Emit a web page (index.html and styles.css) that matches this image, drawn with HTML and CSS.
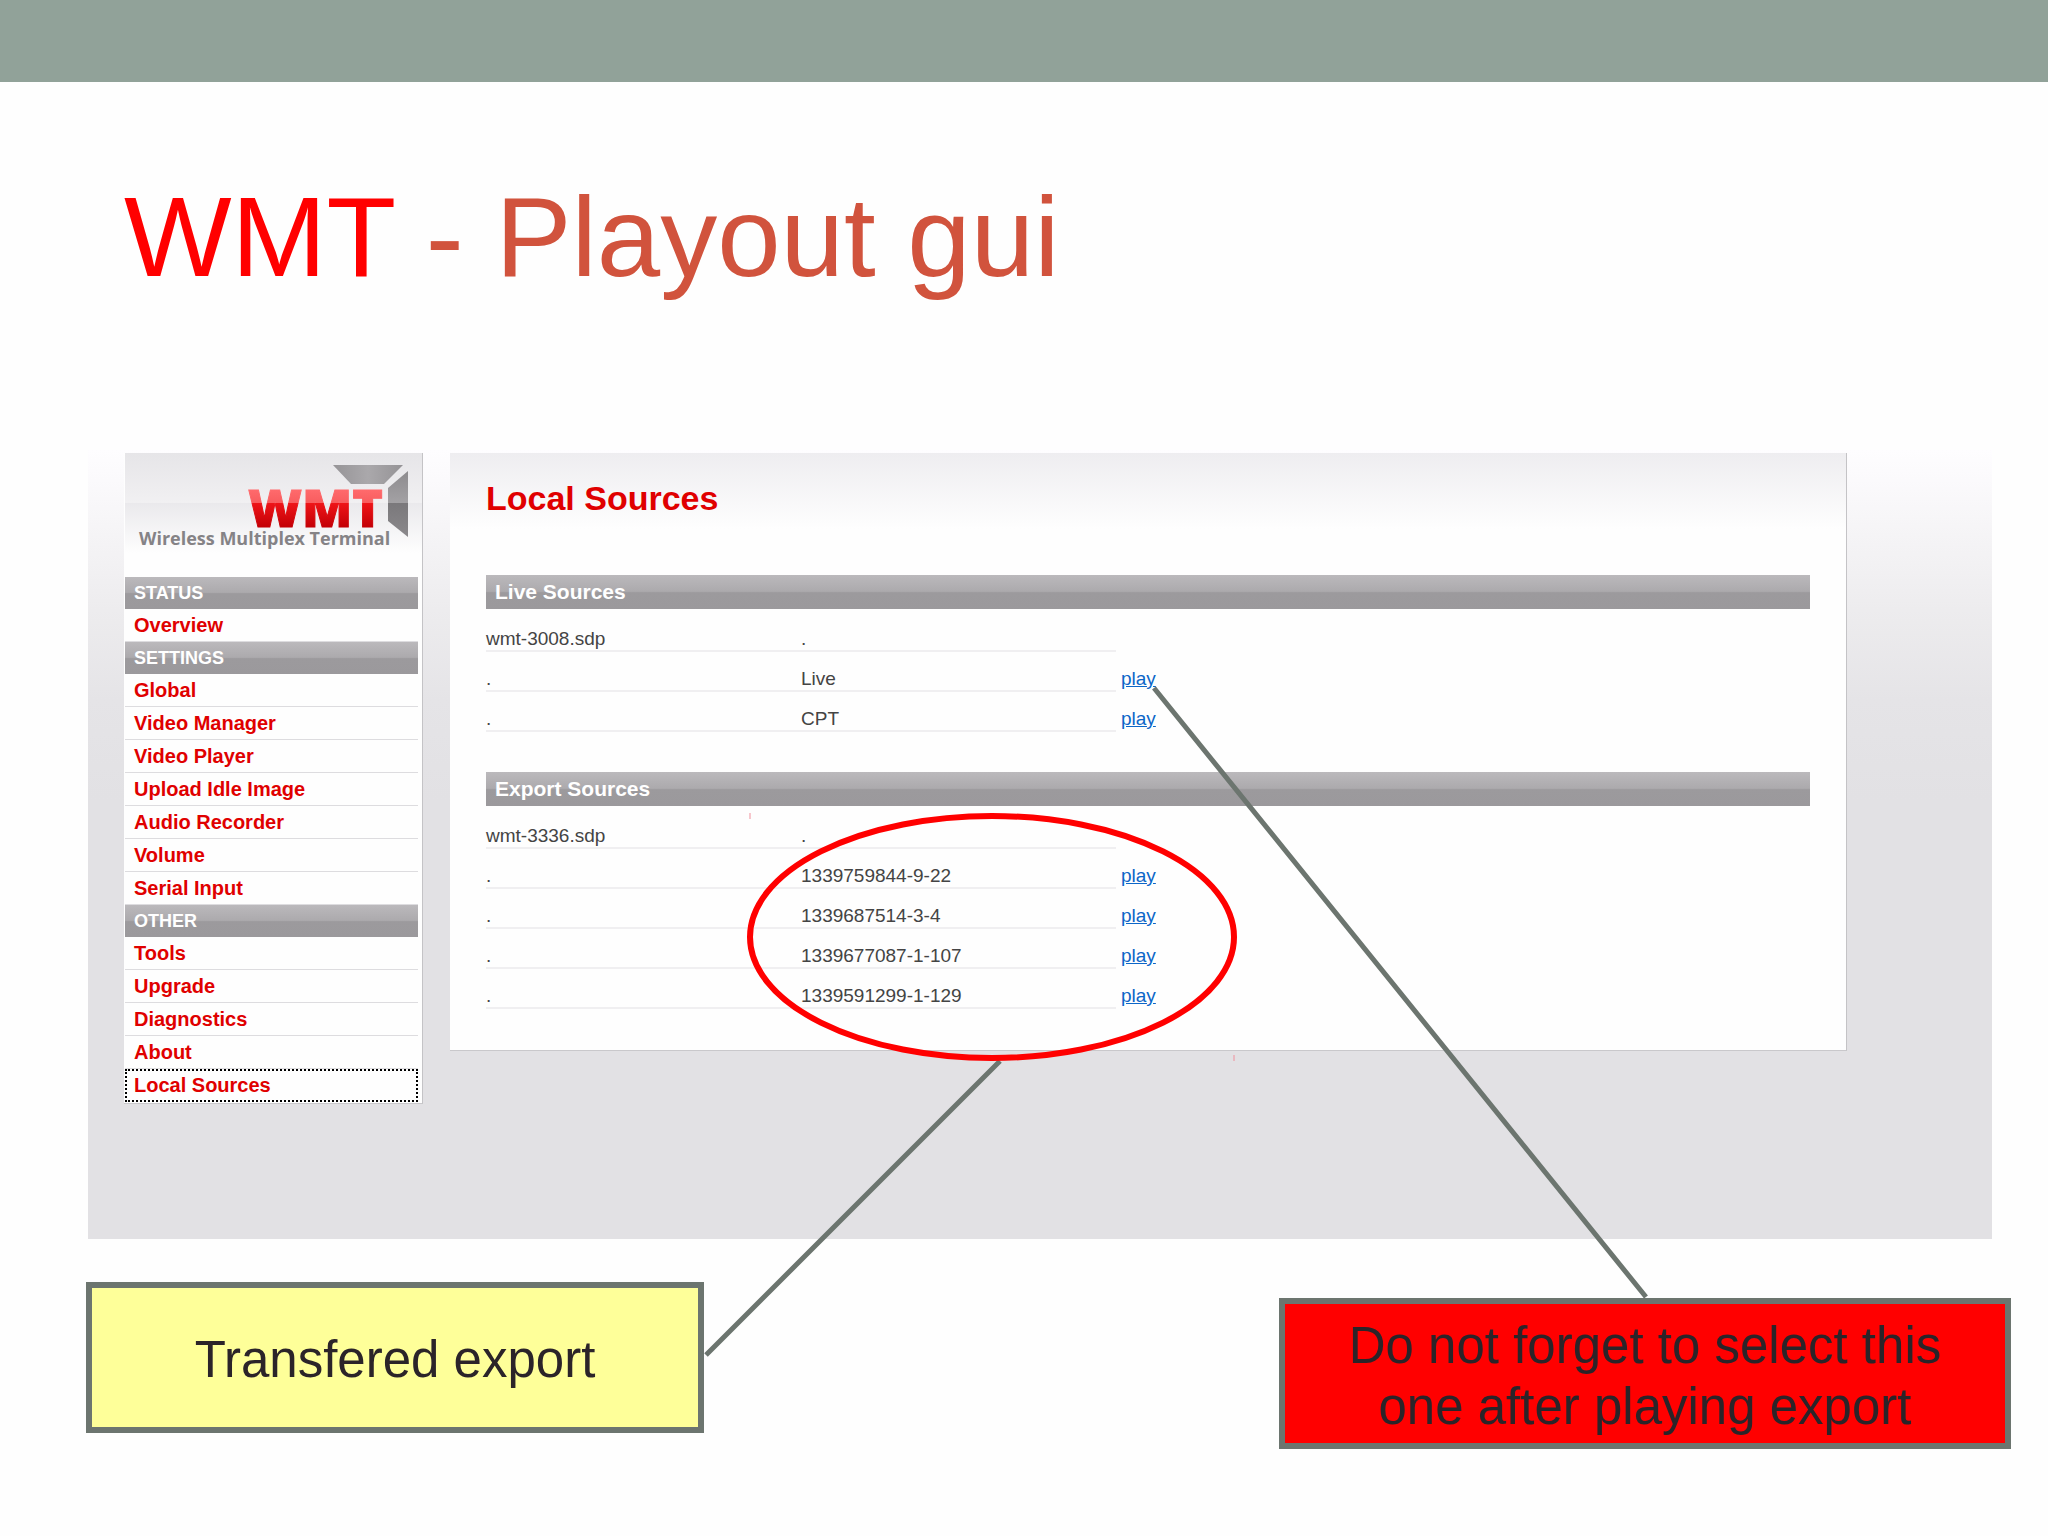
FILE: index.html
```html
<!DOCTYPE html>
<html lang="en">

<head>
  <meta charset="utf-8">
  <meta name="viewport" content="width=device-width, initial-scale=1">
  <title>WMT - Playout gui</title>
  <link rel="stylesheet" href="styles.css">
</head>

<body>
  <div class="slide">
    <div class="top-bar"></div>
    <h1><span class="brand">WMT</span> - Playout gui</h1>

    <div class="screen">
      <div class="sidebar">
        <svg class="logo" viewBox="0 0 297 124" role="img" aria-label="Wireless Multiplex Terminal">
          <defs>
            <linearGradient id="red" gradientUnits="userSpaceOnUse" x1="0" y1="37" x2="0" y2="74">
              <stop offset="0" stop-color="#ff6a6c" />
              <stop offset="0.36" stop-color="#f85c5e" />
              <stop offset="0.36" stop-color="#ee1418" />
              <stop offset="1" stop-color="#c40006" />
            </linearGradient>
            <linearGradient id="top" x1="0" y1="0" x2="1" y2="0">
              <stop offset="0" stop-color="#969497" />
              <stop offset="0.5" stop-color="#aaa8ab" />
              <stop offset="1" stop-color="#959396" />
            </linearGradient>
            <linearGradient id="side" gradientUnits="userSpaceOnUse" x1="0" y1="18" x2="0" y2="84">
              <stop offset="0" stop-color="#8d8b8e" />
              <stop offset="0.48" stop-color="#a3a1a4" />
              <stop offset="0.48" stop-color="#7a787b" />
              <stop offset="1" stop-color="#8b898c" />
            </linearGradient>
          </defs>
          <polygon points="208,12 278,12 259,31 226,31" fill="url(#top)" />
          <polygon points="283,18 283,84 263,68 263,35" fill="url(#side)" />
          <text class="logo-name" x="123" y="74">WMT</text>
          <text class="logo-tagline" x="14" y="92">Wireless Multiplex Terminal</text>
        </svg>

        <nav>
          <h3>STATUS</h3>
          <a href="#">Overview</a>
          <h3>SETTINGS</h3>
          <a href="#">Global</a>
          <a href="#">Video Manager</a>
          <a href="#">Video Player</a>
          <a href="#">Upload Idle Image</a>
          <a href="#">Audio Recorder</a>
          <a href="#">Volume</a>
          <a href="#">Serial Input</a>
          <h3>OTHER</h3>
          <a href="#">Tools</a>
          <a href="#">Upgrade</a>
          <a href="#">Diagnostics</a>
          <a href="#">About</a>
          <a href="#" class="current">Local Sources</a>
        </nav>
      </div>

      <div class="panel">
        <h2>Local Sources</h2>

        <h4>Live Sources</h4>
        <table>
          <tr><td>wmt-3008.sdp</td><td>.</td><td></td></tr>
          <tr><td>.</td><td>Live</td><td><a href="#">play</a></td></tr>
          <tr><td>.</td><td>CPT</td><td><a href="#">play</a></td></tr>
        </table>

        <h4>Export Sources</h4>
        <table>
          <tr><td>wmt-3336.sdp</td><td>.</td><td></td></tr>
          <tr><td>.</td><td>1339759844-9-22</td><td><a href="#">play</a></td></tr>
          <tr><td>.</td><td>1339687514-3-4</td><td><a href="#">play</a></td></tr>
          <tr><td>.</td><td>1339677087-1-107</td><td><a href="#">play</a></td></tr>
          <tr><td>.</td><td>1339591299-1-129</td><td><a href="#">play</a></td></tr>
        </table>
      </div>
    </div>

    <div class="notes">
      <div class="note export">Transfered export</div>
      <div class="note warning">Do not forget to select this one after playing export</div>
    </div>

    <!-- arrows from the notes to the screen -->
    <svg class="marks" viewBox="0 0 2048 1536" aria-hidden="true">
      <path class="pointer" d="M1154 688L1646 1297M1000 1061L706 1355" />
      <ellipse cx="992" cy="937" rx="242" ry="121" />
      <path class="corner" d="M750 813v6M1234 1055v6" />
    </svg>
  </div>
</body>

</html>
```
FILE: styles.css
```css
body {
  margin: 0;
  background-color: #fefefe;
  font-family: "Liberation Sans", Arial, sans-serif;
}

h1,
h2,
h3,
h4 {
  margin: 0;
}

.slide {
  position: relative;
  padding-bottom: 88px;
}

.top-bar {
  height: 82px;
  background-color: #91a299;
}

h1 {
  margin: 90px 124px 148px;
  font-size: 114px;
  line-height: 130px;
  font-weight: normal;
  color: #d1533d;
}

.brand {
  color: #f00;
}

.screen {
  display: flex;
  align-items: flex-start;
  gap: 27px;
  margin: 0 56px 0 88px;
  padding: 3px 145px 135px 36px;
  background: linear-gradient(#fefdff, #fbfafc 30px, #edecee 160px, #e5e4e7 250px, #e2e1e4 350px);
}

/* sidebar */

.sidebar {
  flex: 0 0 298px;
  border-right: 1px solid #c4c3c6;
  border-bottom: 1px solid #c9c8cb;
  background-color: #fefefe;
}

.logo {
  display: block;
  height: 124px;
  margin-left: 1px;
  background: linear-gradient(#e6e5e8, #f1f0f2 50px, #eae9ec 50px, #fefefe 100px);
}

.logo-name {
  font: 800 52px "Open Sans", sans-serif;
  fill: url(#red);
  stroke: url(#red);
  stroke-width: 1;
}

.logo-tagline {
  font: 700 18px "Open Sans", sans-serif;
  fill: #858386;
}

nav {
  padding: 0 4px 1px 1px;
}

h3,
h4 {
  color: #fff;
  background: linear-gradient(#bbb9bc, #acaaad 48%, #9c9a9d 52%, #9b999c);
}

h3 {
  padding-left: 9px;
  font-size: 18px;
  line-height: 32px;
}

nav a {
  display: block;
  padding-left: 9px;
  border-bottom: 1px solid #dddcdf;
  font-size: 20px;
  font-weight: bold;
  line-height: 32px;
  color: #e00000;
  text-decoration: none;
}

nav .current {
  border-bottom-color: transparent;
  outline: 2px dotted #000;
  outline-offset: -2px;
}

/* sources */

.panel {
  flex: 1;
  padding: 25px 36px 1px;
  border-right: 1px solid #c4c3c6;
  border-bottom: 1px solid #c9c8cb;
  background: linear-gradient(#eeedf0, #fefefe 76px);
}

h2 {
  margin-bottom: 57px;
  font-size: 34px;
  line-height: 40px;
  color: #e00000;
}

h4 {
  padding-left: 9px;
  font-size: 21px;
  line-height: 34px;
}

table {
  width: 100%;
  margin: 3px 0 40px;
  border-spacing: 0;
  table-layout: fixed;
  font-size: 19px;
  line-height: 22px;
  color: #444;
}

td {
  width: 315px;
  padding: 16px 0 0;
  border-bottom: 2px solid #f0eff1;
}

td:last-child {
  width: auto;
  padding-left: 5px;
  border-bottom-color: transparent;
}

td a {
  color: #0c66c8;
}

/* notes under the screen */

.notes {
  display: flex;
  align-items: flex-start;
  justify-content: space-between;
  padding: 43px 37px 0 86px;
}

.note {
  display: flex;
  align-items: center;
  justify-content: center;
  box-sizing: border-box;
  min-height: 151px;
  padding: 4px 50px 0;
  border: 6px solid #6c756f;
  font-size: 51px;
  line-height: 61px;
  text-align: center;
  color: #2b2429;
}

.export {
  flex: 0 1 618px;
  background-color: #feff99;
}

.warning {
  flex: 0 1 732px;
  margin-top: 16px;
  background-color: #f00;
}

.marks {
  position: absolute;
  top: 0;
  left: 0;
  width: 100%;
  fill: none;
  pointer-events: none;
}

.pointer {
  stroke: #6c756f;
  stroke-width: 5;
}

.marks ellipse {
  stroke: #f00;
  stroke-width: 6;
}

.corner {
  stroke: #f0909c;
}
```
